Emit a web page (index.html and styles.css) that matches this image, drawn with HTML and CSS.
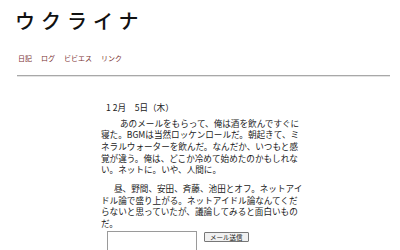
FILE: index.html
```html
<!DOCTYPE html>
<html lang="ja">
<head>
<meta charset="utf-8">
<link rel="stylesheet" href="styles.css">
</head>
<body>
<header class="header">
  <h1 class="title">ウクライナ</h1>
  <nav class="nav">
    <a href="#">日記</a>
    <a href="#">ログ</a>
    <a href="#">ビビエス</a>
    <a href="#">リンク</a>
  </nav>
</header>
<hr class="rule">
<main class="content">
  <div class="date">1 2月　5日（木）</div>
  <p class="para para-1">あのメールをもらって、俺は酒を飲んですぐに<br>寝た。BGMは当然ロッケンロールだ。朝起きて、ミ<br>ネラルウォーターを飲んだ。なんだか、いつもと感<br>覚が違う。俺は、どこか冷めて始めたのかもしれな<br>い。ネットに。いや、人間に。</p>
  <p class="para para-2">昼、野間、安田、斉藤、池田とオフ。ネットアイ<br>ドル論で盛り上がる。ネットアイドル論なんてくだ<br>らないと思っていたが、議論してみると面白いもの<br>だ。</p>
  <form class="mail">
    <textarea class="mail-text"></textarea>
    <button type="button" class="mail-btn">メール送信</button>
  </form>
</main>
</body>
</html>
```
FILE: styles.css
```css
html, body {
  margin: 0;
  padding: 0;
  background: #fff;
  overflow: hidden;
}
body {
  font-family: "Noto Sans CJK JP", "Noto Sans", sans-serif;
  color: #222;
}
.header {
  padding: 9px 0 0 15px;
}
.title {
  margin: 0;
  font-size: 20px;
  line-height: 24px;
  font-weight: 500;
  letter-spacing: 6px;
  color: #111;
}
.nav {
  display: flex;
  gap: 9px;
  margin: 20px 0 0 3px;
  font-size: 7px;
  line-height: 10px;
}
.nav a {
  color: #7a3232;
  text-decoration: none;
}
.rule {
  margin: 12px 10px 0 17px;
  height: 0;
  border: 0;
  border-top: 1px solid #a8a8a8;
  border-bottom: 1px solid #e4e4e4;
}
.content {
  width: 198px;
  margin: 24px auto 0;
  font-size: 8.6px;
}
.date {
  padding-left: 5px;
  line-height: 12px;
}
.para {
  margin: 4.5px 0 0;
  line-height: 11.7px;
  white-space: nowrap;
}
.para-1 {
  text-indent: 19px;
}
.para-2 {
  margin-top: 7px;
  text-indent: 13px;
}
.mail {
  display: flex;
  align-items: flex-start;
  margin: 1px 0 0 6px;
}
.mail-text {
  width: 88px;
  height: 18px;
  margin: 0;
  padding: 0;
  border: 1px solid #9a9a9a;
  border-bottom: 0;
  resize: none;
  overflow-y: scroll;
}
.mail-btn {
  margin: 1px 0 0 7px;
  height: 10px;
  padding: 0 5px;
  font-family: "Noto Sans CJK JP", sans-serif;
  font-size: 6.5px;
  line-height: 8px;
  color: #222;
  background: #f0f0f0;
  border: 1px solid #777;
  border-radius: 1px;
}
```
